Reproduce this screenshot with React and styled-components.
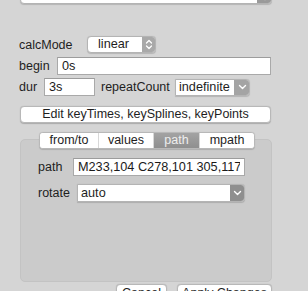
import React from 'react'
import styled, { createGlobalStyle } from 'styled-components'

const GlobalStyle = createGlobalStyle`
  html, body {
    margin: 0;
    padding: 0;
    background: #d5d5d5;
    overflow: hidden;
  }
  body {
    font-family: "Liberation Sans", Arial, sans-serif;
    font-size: 12px;
    color: #1e1e1e;
  }
`

const Panel = styled.div`
  display: flex;
  flex-direction: column;
  width: 252px;
  padding-left: 20px;
`

const Row = styled.div`
  display: flex;
  align-items: center;
  height: ${(props) => props.h || 17}px;
  margin-top: ${(props) => props.mt || 0}px;
`

const Label = styled.span`
  width: ${(props) => props.w}px;
  margin-left: ${(props) => props.ml || -1}px;
  flex: none;
  line-height: 14px;
  font-size: 12.5px;
  white-space: nowrap;
`

const TextField = styled.input`
  box-sizing: border-box;
  width: ${(props) => props.w}px;
  height: 18px;
  margin: 0;
  padding: 0 4px;
  border: 1px solid #a9a9a9;
  border-top-color: #9c9c9c;
  background: #fff;
  font: inherit;
  font-size: 12.7px;
  color: #1a1a1a;
  outline: none;
`

const PopUp = styled.div`
  box-sizing: border-box;
  display: flex;
  width: ${(props) => props.w}px;
  height: ${(props) => props.h || 17}px;
  background: #fff;
  border: 1px solid #b4b4b4;
  border-radius: ${(props) => (props.round ? 4 : 0)}px 4px 4px ${(props) => (props.round ? 4 : 0)}px;
  box-shadow: 0 0.5px 1px rgba(0, 0, 0, 0.15);
  overflow: hidden;
`

const PopUpText = styled.span`
  flex: 1;
  padding-left: ${(props) => props.pl || 3}px;
  line-height: ${(props) => (props.h || 17) - 2}px;
  font-size: 12.7px;
  white-space: nowrap;
  overflow: hidden;
`

const ArrowBox = styled.span`
  display: flex;
  align-items: center;
  justify-content: center;
  width: ${(props) => props.w || 14}px;
  background: ${(props) => props.bg};
  margin: -1px -1px -1px 0;
`

const PushButton = styled.div`
  box-sizing: border-box;
  width: ${(props) => props.w}px;
  height: ${(props) => props.h || 17}px;
  background: #fff;
  border: 1px solid #b8b8b8;
  border-radius: 4px;
  box-shadow: 0 0.5px 1px rgba(0, 0, 0, 0.2);
  text-align: center;
  line-height: ${(props) => (props.h || 17) - 2}px;
  font-size: 12.5px;
  white-space: nowrap;
`

const Group = styled.div`
  position: relative;
  box-sizing: border-box;
  width: 252px;
  height: 143px;
  margin-top: 16px;
  background: #cbcbcb;
  border: 1px solid #c3c3c3;
  border-radius: 5px;
  padding: 18px 0 0 18px;
`

const Tabs = styled.div`
  position: absolute;
  top: -8px;
  left: 18px;
  display: flex;
  height: 17px;
  box-sizing: border-box;
  border: 1px solid #b8b8b8;
  border-radius: 4px;
  background: #fff;
  overflow: hidden;
  box-shadow: 0 0.5px 1px rgba(0, 0, 0, 0.15);
`

const Tab = styled.span`
  width: ${(props) => props.w}px;
  text-align: center;
  line-height: 15px;
  font-size: 12.5px;
  border-left: ${(props) => (props.first ? 'none' : '1px solid #d8d8d8')};
  background: ${(props) => (props.active ? 'linear-gradient(#a3a3a3, #8f8f8f)' : '#fff')};
  color: ${(props) => (props.active ? '#eeeeee' : '#1e1e1e')};
`

const Footer = styled.div`
  display: flex;
  justify-content: flex-end;
  gap: 10px;
  margin-top: 2px;
`

function Stepper() {
  return (
    <svg width="8" height="11" viewBox="0 0 8 11">
      <path d="M1.5 4 L4 1.5 L6.5 4 M1.5 7 L4 9.5 L6.5 7" fill="none" stroke="#fff" strokeWidth="1.3" strokeLinecap="round" strokeLinejoin="round" />
    </svg>
  )
}

function Chevron() {
  return (
    <svg width="9" height="6" viewBox="0 0 9 6">
      <path d="M1.5 1.5 L4.5 4.5 L7.5 1.5" fill="none" stroke="#fff" strokeWidth="1.4" strokeLinecap="round" strokeLinejoin="round" />
    </svg>
  )
}

export default function App() {
  return (
    <>
      <GlobalStyle />
      <Panel>
        <Row h={17} mt={-13}>
          <PopUp w={268} round>
            <PopUpText />
            <ArrowBox w={15} bg="#9a9a9a">
              <Stepper />
            </ArrowBox>
          </PopUp>
        </Row>

        <Row h={17} mt={32}>
          <Label w={68}>calcMode</Label>
          <PopUp w={69} round>
            <PopUpText pl={10}>linear</PopUpText>
            <ArrowBox w={14} bg="#a9a9a9">
              <Stepper />
            </ArrowBox>
          </PopUp>
        </Row>

        <Row h={18} mt={4}>
          <Label w={38}>begin</Label>
          <TextField w={214} readOnly defaultValue="0s" />
        </Row>

        <Row h={18} mt={3}>
          <Label w={25}>dur</Label>
          <TextField w={51} readOnly defaultValue="3s" />
          <Label w={74} ml={6}>repeatCount</Label>
          <PopUp w={75} h={17}>
            <PopUpText>indefinite</PopUpText>
            <ArrowBox w={16} bg="#a4a4a4">
              <Chevron />
            </ArrowBox>
          </PopUp>
        </Row>

        <Row h={17} mt={10}>
          <PushButton w={251}>Edit keyTimes, keySplines, keyPoints</PushButton>
        </Row>

        <Group>
          <Tabs>
            <Tab w={58} first>from/to</Tab>
            <Tab w={54}>values</Tab>
            <Tab w={45} active>path</Tab>
            <Tab w={54}>mpath</Tab>
          </Tabs>
          <Row h={18}>
            <Label w={35}>path</Label>
            <TextField w={172} readOnly defaultValue="M233,104 C278,101 305,117 305,138" />
          </Row>
          <Row h={18} mt={8}>
            <Label w={39}>rotate</Label>
            <PopUp w={168} h={18}>
              <PopUpText h={18}>auto</PopUpText>
              <ArrowBox w={15} bg="#8f8f8f">
                <Chevron />
              </ArrowBox>
            </PopUp>
          </Row>
        </Group>

        <Footer>
          <PushButton w={51} h={19}>Cancel</PushButton>
          <PushButton w={95} h={19}>Apply Changes</PushButton>
        </Footer>
      </Panel>
    </>
  )
}
